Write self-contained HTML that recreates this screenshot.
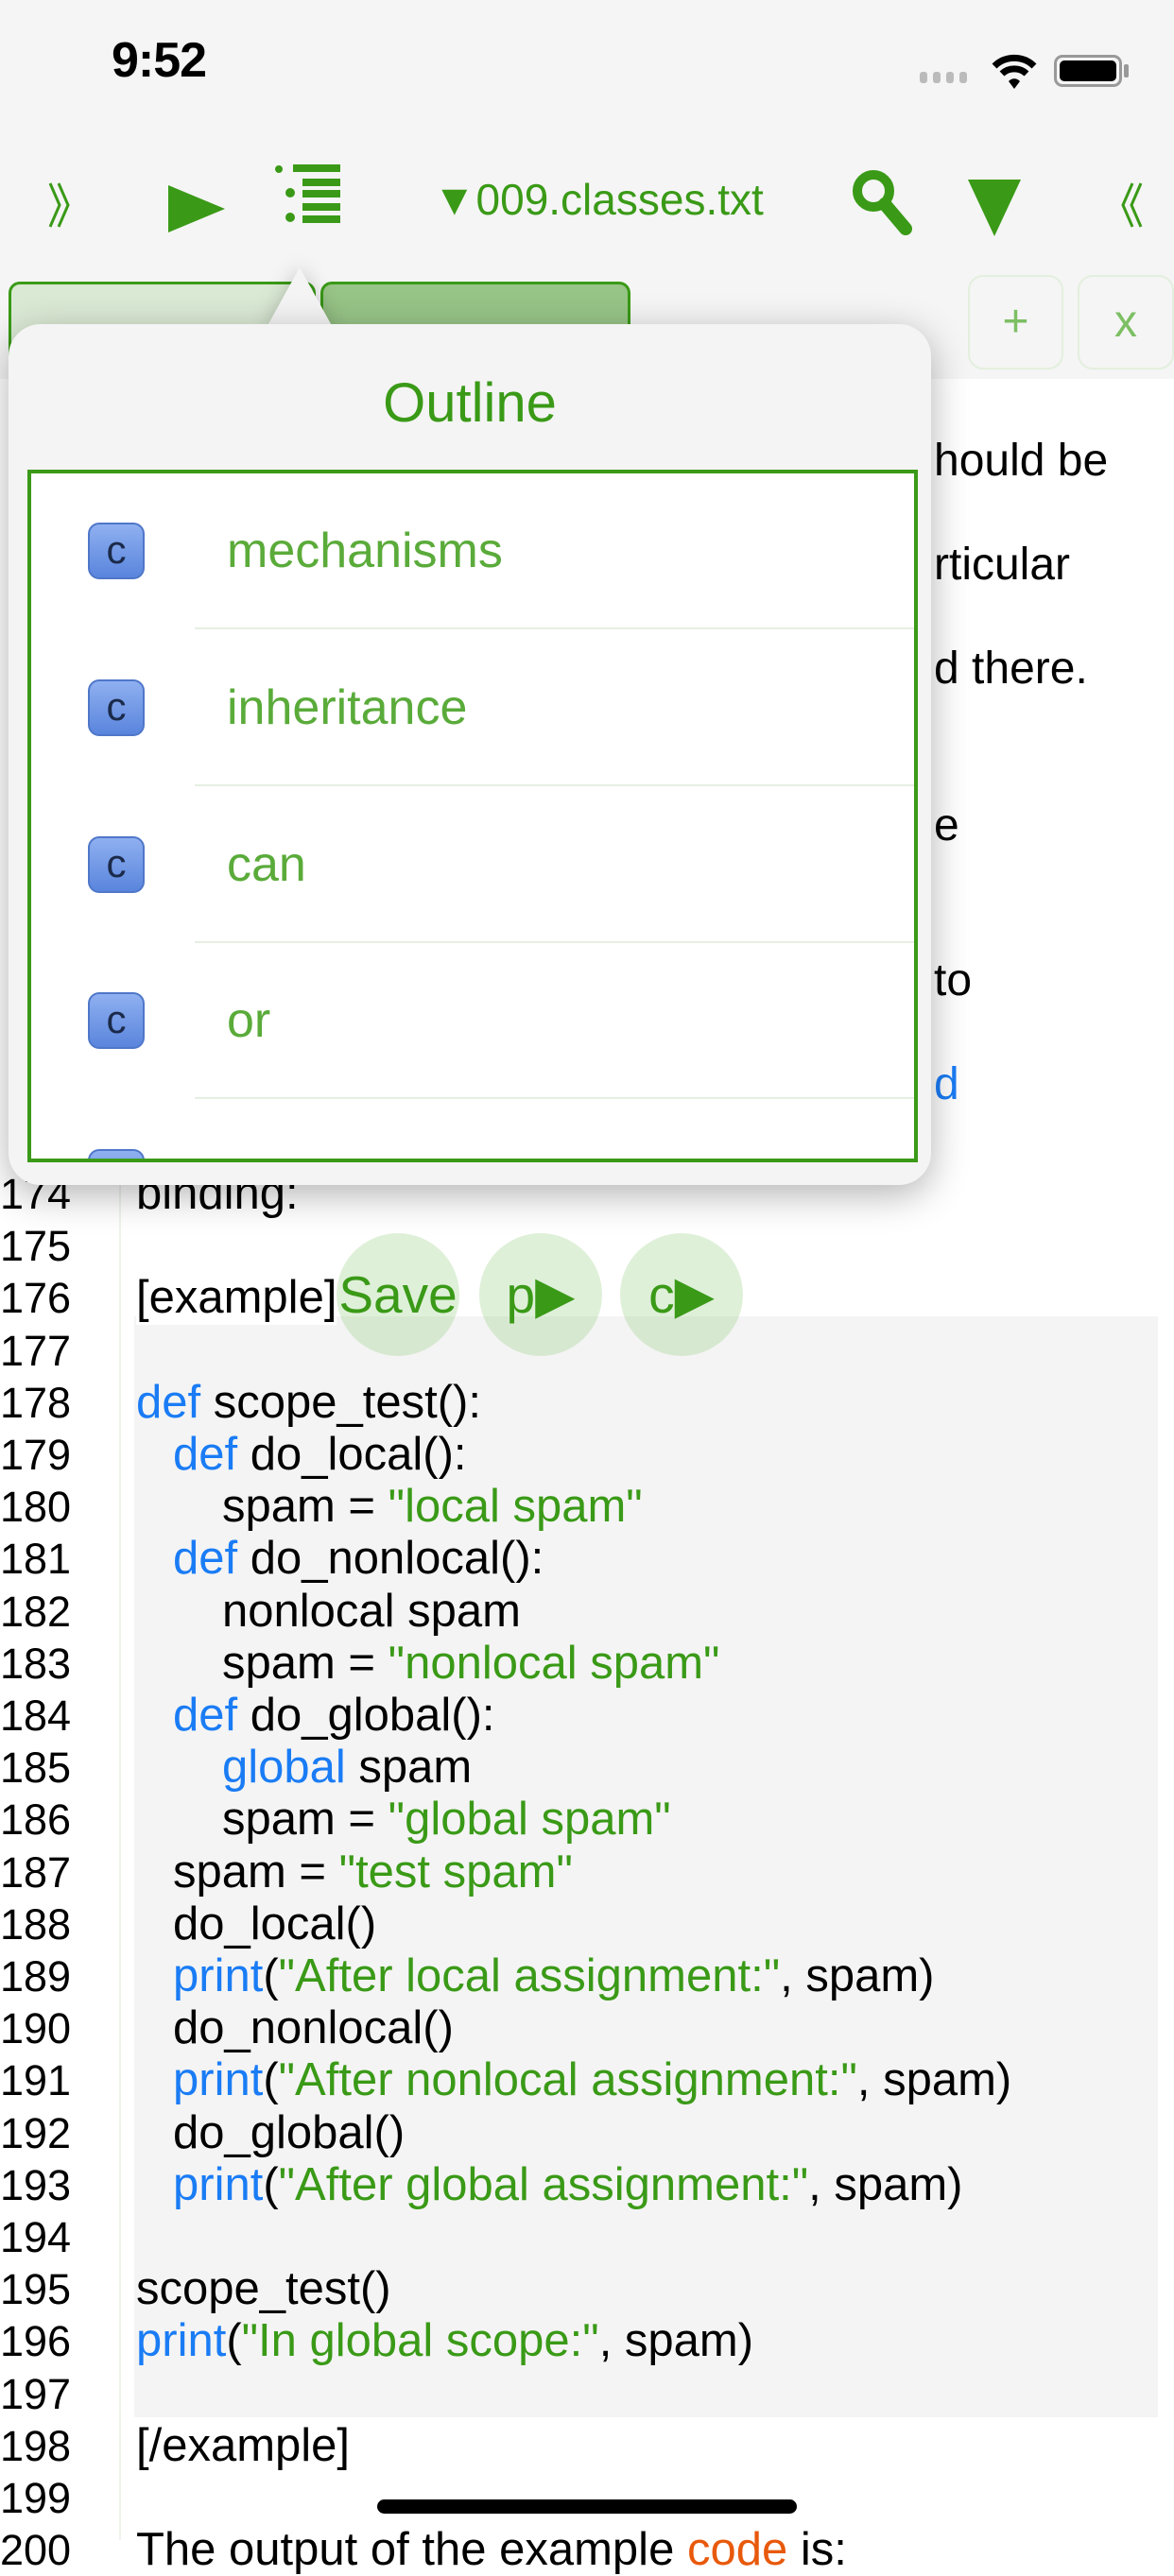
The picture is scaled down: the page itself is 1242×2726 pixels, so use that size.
<!DOCTYPE html>
<html><head><meta charset="utf-8"><style>
*{margin:0;padding:0;box-sizing:border-box}
body{width:1242px;height:2688px;overflow:hidden;background:#fff;font-family:"Liberation Sans",sans-serif;position:relative}
.top{position:absolute;left:0;top:0;width:1242px;height:401px;background:#f5f5f5}
.abs{position:absolute}
.g{color:#3a9a17}
.code{position:absolute;left:0;top:1236px;width:1242px;font-size:49px;line-height:55.2px}
.ln{position:absolute;left:0;width:110px;color:#000;font-size:45px}
.tx{position:absolute;left:144px;white-space:pre;color:#000}
.k{color:#1a7cf5}.s{color:#3a9a17}
.row{position:absolute;left:0;width:942px;height:165px}
.ic{position:absolute;left:60px;top:52px;width:60px;height:60px;border-radius:12px;background:linear-gradient(#8fb0f0,#5a85dd);border:2px solid #4f77c9;color:#1b2a4a;font-size:42px;text-align:center;line-height:54px}
.rt{position:absolute;left:207px;top:0;line-height:165px;font-size:52px;color:#5aab3a}
.sep{position:absolute;left:173px;right:0;bottom:0;height:2px;background:#e6f0e2}
.btn{position:absolute;width:130px;height:130px;border-radius:50%;background:rgba(150,205,130,.3);color:#3a9a17;font-size:55px;text-align:center;line-height:130px}
.pr{position:absolute;left:988px;font-size:48px;line-height:55px}
</style></head><body>
<div class="top"></div>
<div class="abs" style="left:118px;top:34px;font-size:52px;font-weight:bold;letter-spacing:-1px">9:52</div>
<div class="abs" style="left:973px;top:76px;width:52px;height:14px">
<span class="abs" style="left:0;width:8px;height:12px;background:#bbb;border-radius:3px"></span><span class="abs" style="left:14px;width:8px;height:12px;background:#bbb;border-radius:3px"></span><span class="abs" style="left:28px;width:8px;height:12px;background:#bbb;border-radius:3px"></span><span class="abs" style="left:42px;width:8px;height:12px;background:#bbb;border-radius:3px"></span></div>
<svg class="abs" style="left:1048px;top:56px" width="50" height="40" viewBox="0 0 50 40"><path d="M4 14 A30 30 0 0 1 46 14" stroke="#000" stroke-width="7" fill="none"/><path d="M12 22 A19 19 0 0 1 38 22" stroke="#000" stroke-width="7" fill="none"/><path d="M19 30 L25 38 L31 30 A8 8 0 0 0 19 30Z" fill="#000"/></svg>
<div class="abs" style="left:1115px;top:58px;width:72px;height:34px;border:3px solid #999;border-radius:9px"><div style="margin:3px;height:22px;background:#000;border-radius:5px"></div></div>
<div class="abs" style="left:1189px;top:68px;width:5px;height:14px;background:#999;border-radius:2px"></div>
<!-- toolbar -->
<svg class="abs" style="left:50px;top:192px" width="30" height="50" viewBox="0 0 30 50"><path d="M3 2 L13 25 L3 48 M12 2 L22 25 L12 48" stroke="#3a9a17" stroke-width="3" fill="none"/></svg>
<svg class="abs" style="left:178px;top:196px" width="62" height="50"><path d="M0 0 L60 25 L0 50Z" fill="#3a9a17"/></svg>
<svg class="abs" style="left:290px;top:174px" width="70" height="70"><g fill="#3a9a17"><circle cx="5" cy="5" r="4"/><circle cx="17" cy="30" r="5"/><circle cx="17" cy="56" r="5"/><rect x="20" y="0" width="50" height="8"/><rect x="30" y="15" width="40" height="8"/><rect x="30" y="27" width="40" height="8"/><rect x="30" y="41" width="40" height="8"/><rect x="30" y="54" width="40" height="8"/></g></svg>
<div class="abs g" style="left:458px;top:184px;font-size:46px">▼009.classes.txt</div>
<svg class="abs" style="left:900px;top:178px" width="72" height="72"><circle cx="24" cy="24" r="17" stroke="#3a9a17" stroke-width="10" fill="none"/><path d="M36 38 L58 64" stroke="#3a9a17" stroke-width="14" stroke-linecap="round"/></svg>
<svg class="abs" style="left:1024px;top:190px" width="56" height="60"><path d="M0 0 L56 0 L28 60Z" fill="#3a9a17"/></svg>
<svg class="abs" style="left:1180px;top:192px" width="30" height="50" viewBox="0 0 30 50"><path d="M27 2 L17 25 L27 48 M18 2 L8 25 L18 48" stroke="#3a9a17" stroke-width="3" fill="none"/></svg>
<!-- tabs -->
<div class="abs" style="left:9px;top:298px;width:325px;height:110px;background:#dae9d4;border:3px solid #3a9a17;border-bottom:none;border-radius:12px 12px 0 0"></div>
<div class="abs" style="left:339px;top:298px;width:328px;height:110px;background:#97c487;border:3px solid #3a9a17;border-bottom:none;border-radius:12px 12px 0 0"></div>
<div class="abs" style="left:1024px;top:291px;width:101px;height:100px;border:2px solid #e3efde;border-radius:16px;color:#7cbf63;font-size:48px;text-align:center;line-height:96px">+</div>
<div class="abs" style="left:1140px;top:291px;width:102px;height:100px;border:2px solid #e3efde;border-radius:16px;color:#7cbf63;font-size:48px;text-align:center;line-height:96px">x</div>
<div class="abs" style="left:0;top:401px;width:1242px;height:2287px;background:#fff"></div>
<!-- prose behind popover -->
<div class="pr" style="top:460px">hould be</div>
<div class="pr" style="top:570px">rticular</div>
<div class="pr" style="top:680px">d there.</div>
<div class="pr" style="top:846px">e</div>
<div class="pr" style="top:1010px">to</div>
<div class="pr" style="top:1120px;color:#1a7cf5">d</div>
<!-- code bg -->
<div class="abs" style="left:142px;top:1393px;width:1083px;height:1165px;background:#f4f4f4"></div>
<div class="abs" style="left:126px;top:401px;width:2px;height:2287px;background:#eef3ec"></div>
<div class="code">
<div class="ln" style="top:0">174</div><div class="tx" style="top:0">binding:</div>
<div class="ln" style="top:55.2px">175</div>
<div class="ln" style="top:110.4px">176</div><div class="tx" style="top:110.4px;background:#fff">[example]</div>
<div class="ln" style="top:165.6px">177</div>
<div class="ln" style="top:220.8px">178</div><div class="tx" style="top:220.8px"><span class="k">def</span> scope_test():</div>
<div class="ln" style="top:276px">179</div><div class="tx" style="top:276px;left:183px"><span class="k">def</span> do_local():</div>
<div class="ln" style="top:331.2px">180</div><div class="tx" style="top:331.2px;left:235px">spam = <span class="s">"local spam"</span></div>
<div class="ln" style="top:386.4px">181</div><div class="tx" style="top:386.4px;left:183px"><span class="k">def</span> do_nonlocal():</div>
<div class="ln" style="top:441.6px">182</div><div class="tx" style="top:441.6px;left:235px">nonlocal spam</div>
<div class="ln" style="top:496.8px">183</div><div class="tx" style="top:496.8px;left:235px">spam = <span class="s">"nonlocal spam"</span></div>
<div class="ln" style="top:552px">184</div><div class="tx" style="top:552px;left:183px"><span class="k">def</span> do_global():</div>
<div class="ln" style="top:607.2px">185</div><div class="tx" style="top:607.2px;left:235px"><span class="k">global</span> spam</div>
<div class="ln" style="top:662.4px">186</div><div class="tx" style="top:662.4px;left:235px">spam = <span class="s">"global spam"</span></div>
<div class="ln" style="top:717.6px">187</div><div class="tx" style="top:717.6px;left:183px">spam = <span class="s">"test spam"</span></div>
<div class="ln" style="top:772.8px">188</div><div class="tx" style="top:772.8px;left:183px">do_local()</div>
<div class="ln" style="top:828px">189</div><div class="tx" style="top:828px;left:183px"><span class="k">print</span>(<span class="s">"After local assignment:"</span>, spam)</div>
<div class="ln" style="top:883.2px">190</div><div class="tx" style="top:883.2px;left:183px">do_nonlocal()</div>
<div class="ln" style="top:938.4px">191</div><div class="tx" style="top:938.4px;left:183px"><span class="k">print</span>(<span class="s">"After nonlocal assignment:"</span>, spam)</div>
<div class="ln" style="top:993.6px">192</div><div class="tx" style="top:993.6px;left:183px">do_global()</div>
<div class="ln" style="top:1048.8px">193</div><div class="tx" style="top:1048.8px;left:183px"><span class="k">print</span>(<span class="s">"After global assignment:"</span>, spam)</div>
<div class="ln" style="top:1104px">194</div>
<div class="ln" style="top:1159.2px">195</div><div class="tx" style="top:1159.2px">scope_test()</div>
<div class="ln" style="top:1214.4px">196</div><div class="tx" style="top:1214.4px"><span class="k">print</span>(<span class="s">"In global scope:"</span>, spam)</div>
<div class="ln" style="top:1269.6px">197</div>
<div class="ln" style="top:1324.8px">198</div><div class="tx" style="top:1324.8px;background:#fff">[/example]</div>
<div class="ln" style="top:1380px">199</div>
<div class="ln" style="top:1435.2px">200</div><div class="tx" style="top:1435.2px">The output of the example <span style="color:#e8590c">code</span> is:</div>
</div>
<!-- floating buttons -->
<div class="btn" style="left:356px;top:1305px">Save</div>
<div class="btn" style="left:507px;top:1305px">p▶</div>
<div class="btn" style="left:656px;top:1305px">c▶</div>
<!-- popover -->
<svg class="abs" style="left:280px;top:280px;filter:drop-shadow(0 0 10px rgba(0,0,0,.2))" width="76" height="70"><path d="M0 70 L37 3 L74 70Z" fill="#f4f4f4"/></svg>
<div class="abs" style="left:9px;top:343px;width:976px;height:911px;background:#f4f4f4;border-radius:34px;box-shadow:0 10px 40px rgba(0,0,0,.3)">
<div class="abs g" style="left:0;width:976px;top:50px;text-align:center;font-size:58px">Outline</div>
<div class="abs" style="left:20px;top:154px;width:942px;height:733px;background:#fff;border:4px solid #3a9a17;overflow:hidden">
<div class="row" style="top:0"><div class="ic">c</div><div class="rt">mechanisms</div><div class="sep"></div></div>
<div class="row" style="top:166px"><div class="ic">c</div><div class="rt">inheritance</div><div class="sep"></div></div>
<div class="row" style="top:332px"><div class="ic">c</div><div class="rt">can</div><div class="sep"></div></div>
<div class="row" style="top:497px"><div class="ic">c</div><div class="rt">or</div><div class="sep"></div></div>
<div class="row" style="top:663px"><div class="ic">c</div><div class="rt">not</div></div>
</div>
</div>
<div class="abs" style="left:399px;top:2645px;width:444px;height:15px;background:#000;border-radius:8px"></div>
</body></html>
